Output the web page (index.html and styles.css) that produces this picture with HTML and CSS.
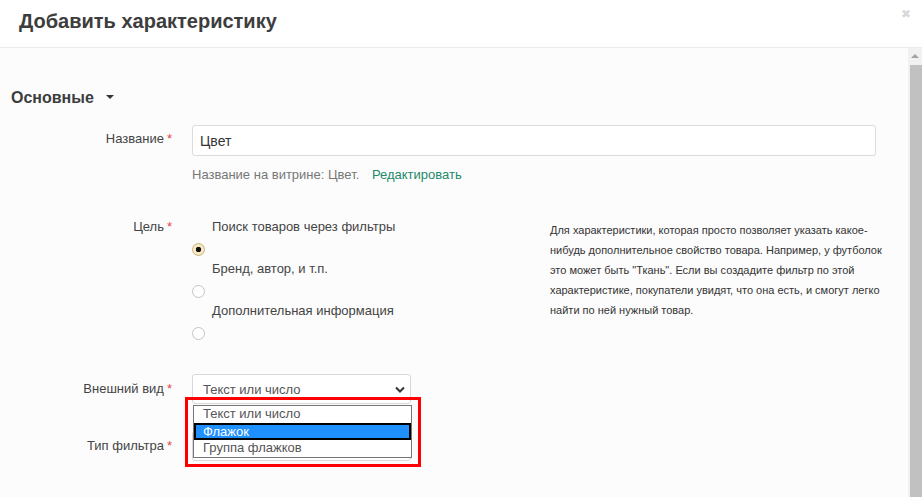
FILE: index.html
```html
<!DOCTYPE html>
<html>
	<head>
		<meta charset="UTF-8">
		<title>Добавить характеристику</title>
		<link rel="stylesheet" href="styles.css">
	</head>
	<body>
		<div class="dialog">
			<div class="dialog-head">
				<h1>Добавить характеристику</h1>
				<span class="close">&#10006;</span>
			</div>
			<div class="dialog-body">
				<div class="content">
					<div class="section-title">Основные <span class="caret"></span></div>

					<div class="row row-name">
						<label class="label">Название<i>*</i></label>
						<div class="field">
							<input class="input" type="text" value="Цвет">
							<div class="hint">Название на витрине: Цвет. <a href="#">Редактировать</a></div>
						</div>
					</div>

					<div class="row row-goal">
						<label class="label">Цель<i>*</i></label>
						<div class="field options">
							<div class="option">
								<div class="option-text">Поиск товаров через фильтры</div>
								<span class="radio checked"></span>
							</div>
							<div class="option">
								<div class="option-text">Бренд, автор, и т.п.</div>
								<span class="radio"></span>
							</div>
							<div class="option">
								<div class="option-text">Дополнительная информация</div>
								<span class="radio"></span>
							</div>
						</div>
						<div class="desc">Для характеристики, которая просто позволяет указать какое-нибудь дополнительное свойство товара. Например, у футболок это может быть "Ткань". Если вы создадите фильтр по этой характеристике, покупатели увидят, что она есть, и смогут легко найти по ней нужный товар.</div>
					</div>

					<div class="row row-look">
						<label class="label">Внешний вид<i>*</i></label>
						<div class="field">
							<div class="select">Текст или число
								<svg class="chev" width="10" height="7" viewBox="0 0 10 7"><path d="M1 1.5 L5 5.5 L9 1.5" fill="none" stroke="#333" stroke-width="2"/></svg>
							</div>
							<div class="mark"></div>
							<ul class="dropdown">
								<li>Текст или число</li>
								<li class="active">Флажок</li>
								<li>Группа флажков</li>
							</ul>
						</div>
					</div>

					<div class="row row-type">
						<label class="label">Тип фильтра<i>*</i></label>
						<div class="field">
							<div class="select small"></div>
						</div>
					</div>
				</div>
				<div class="scrollbar">
					<div class="arrow"></div>
					<div class="thumb"></div>
				</div>
			</div>
		</div>
	</body>
</html>
```

FILE: styles.css
```css
*{
	padding: 0;
	margin: 0;
	box-sizing: border-box;
}
body{
	font-family: "Liberation Sans", Arial, sans-serif;
	font-size: 13px;
	color: #444;
	background: #fff;
}
ul,li{
	list-style: none;
}
.dialog {
	width: 922px;
	height: 497px;
	overflow: hidden;
	display: flex;
	flex-direction: column;
}
.dialog-head {
	position: relative;
	height: 48px;
	border-bottom: 1px solid #ebebeb;
	padding-left: 19px;
	display: flex;
	align-items: center;
	background: #fff;
}
.dialog-head h1 {
	font-size: 20px;
	font-weight: bold;
	color: #3d3d3d;
	margin-top: -4px;
}
.close {
	position: absolute;
	right: 11px;
	top: 7px;
	font-size: 12px;
	color: #d8d8d8;
}
.dialog-body {
	flex: 1;
	display: flex;
	background: #fcfcfc;
}
.content {
	flex: 1;
	padding-top: 40px;
}
.section-title {
	padding-left: 11px;
	font-size: 16px;
	font-weight: bold;
	color: #3d3d3d;
	height: 20px;
	line-height: 20px;
}
.caret {
	display: inline-block;
	width: 0;
	height: 0;
	margin-left: 8px;
	vertical-align: middle;
	margin-top: -3px;
	border-left: 4px solid transparent;
	border-right: 4px solid transparent;
	border-top: 4px solid #333;
}
.row {
	display: grid;
	grid-template-columns: 172px 684px;
	column-gap: 20px;
}
.label {
	text-align: right;
	color: #444;
}
.label i {
	font-style: normal;
	color: #e0484f;
	margin-left: 3px;
}
.row-name {
	margin-top: 17px;
}
.row-name .label {
	padding-top: 6px;
}
.input {
	display: block;
	width: 684px;
	height: 31px;
	border: 1px solid #dcdcdc;
	border-radius: 3px;
	padding: 0 7px;
	font-family: "Liberation Sans", Arial, sans-serif;
	font-size: 14px;
	color: #333;
	background: #fff;
}
.hint {
	margin-top: 11px;
	color: #777;
	line-height: 15px;
}
.hint a {
	color: #23896a;
	text-decoration: none;
	margin-left: 9px;
}
.row-goal {
	margin-top: 37px;
	grid-template-columns: 172px 338px 340px;
}
.option {
	height: 42px;
}
.option-text {
	padding-left: 20px;
	line-height: 16px;
}
.radio {
	display: block;
	width: 13px;
	height: 13px;
	margin-top: 8px;
	border: 1px solid #c4c4c4;
	border-radius: 50%;
	background: #fff;
}
.radio.checked {
	border-color: #c9b37e;
	background: radial-gradient(circle, #111 0 2.5px, #f7e8c4 3px);
}
.desc {
	font-size: 11px;
	line-height: 20px;
	color: #333;
	margin-top: 1px;
	padding-right: 6px;
}
.row-look {
	margin-top: 29px;
}
.row-look .label, .row-type .label {
	padding-top: 7px;
}
.row-look .field, .row-type .field {
	position: relative;
}
.select {
	width: 219px;
	height: 30px;
	border: 1px solid #d8d8d8;
	border-radius: 3px;
	background: #fff;
	padding: 7px 10px 0;
	color: #555;
	font-size: 13px;
	position: relative;
}
.chev {
	position: absolute;
	right: 5px;
	top: 11px;
}
.row-type {
	margin-top: 27px;
}
.dropdown {
	position: absolute;
	left: 1px;
	top: 31px;
	width: 219px;
	border: 1px solid #767676;
	background: #fff;
	z-index: 2;
	padding: 0;
}
.dropdown li {
	height: 17px;
	line-height: 16px;
	padding-left: 9px;
	color: #555;
	font-size: 13px;
}
.dropdown li.active {
	background: #1e90ff;
	color: #fff;
	border: 2px solid #000;
	padding-left: 7px;
	line-height: 13px;
}
.mark {
	position: absolute;
	left: -7px;
	top: 23px;
	width: 236px;
	height: 70px;
	border: 3px solid #f00;
	z-index: 3;
}
.scrollbar {
	width: 14px;
	background: #f1f1f1;
	display: flex;
	flex-direction: column;
	align-items: flex-end;
}
.arrow {
	width: 14px;
	height: 17px;
	position: relative;
}
.arrow:after {
	content: "";
	position: absolute;
	left: 3px;
	top: 6px;
	border-left: 4px solid transparent;
	border-right: 4px solid transparent;
	border-bottom: 4px solid #a3a3a3;
}
.thumb {
	width: 12px;
	flex: 1;
	background: #c1c1c1;
}
```
